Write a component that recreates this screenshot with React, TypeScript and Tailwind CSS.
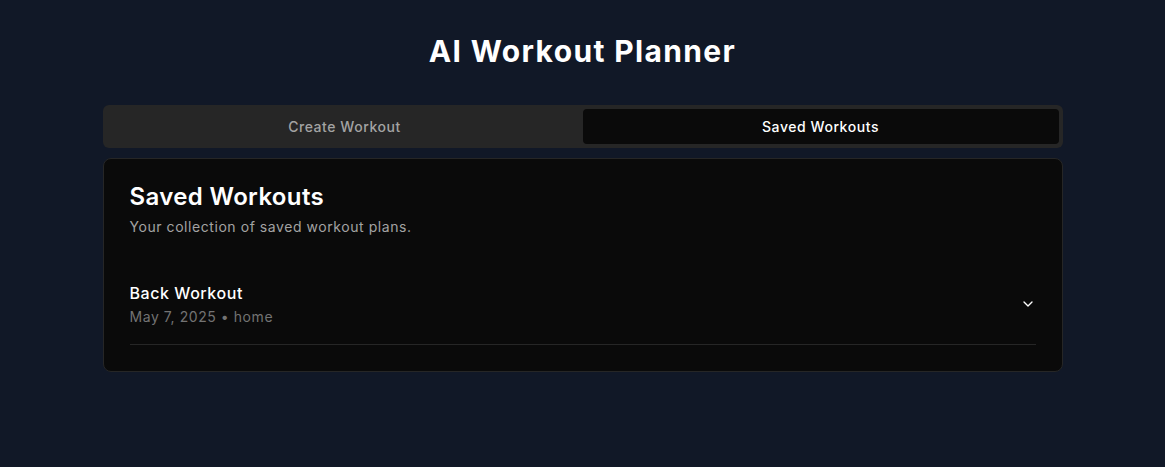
import React from "react";

export default function App() {
  return (
    <div
      className="min-h-screen w-full bg-[#111827] text-white tracking-[0.035em]"
      style={{ fontFamily: "Inter, 'Noto Sans', sans-serif" }}
    >
      <div className="mx-auto max-w-5xl px-8 pt-[33px]">
        <h1 className="mb-9 text-center text-3xl font-bold leading-9 tracking-[0.045em] text-white">AI Workout Planner</h1>

        <div className="grid h-[43px] grid-cols-2 rounded-md bg-[#262626] p-1">
          <button className="flex items-center justify-center rounded-sm text-sm font-medium text-[#a3a3a3]">
            Create Workout
          </button>
          <button className="flex items-center justify-center rounded-sm bg-[#0a0a0a] text-sm font-medium text-white">
            Saved Workouts
          </button>
        </div>

        <div className="mt-[10px] rounded-lg border border-[#262626] bg-[#0a0a0a]">
          <div className="flex flex-col gap-2 px-[26px] pb-6 pt-[26px]">
            <h2 className="text-2xl font-semibold leading-none tracking-[0.015em]">Saved Workouts</h2>
            <p className="text-sm text-[#a3a3a3]">Your collection of saved workout plans.</p>
          </div>
          <div className="px-[26px] pb-[26px] pt-1">
            <div className="flex items-center justify-between border-b border-[#262626] pb-[17px] pt-4">
              <div className="flex flex-col gap-0.5">
                <span className="text-base font-medium leading-6">Back Workout</span>
                <span className="text-sm text-[#737373]">May 7, 2025 • home</span>
              </div>
              <svg
                width="16"
                height="16"
                viewBox="0 0 24 24"
                fill="none"
                stroke="currentColor"
                strokeWidth="2"
                strokeLinecap="round"
                strokeLinejoin="round"
              >
                <path d="m6 9 6 6 6-6" />
              </svg>
            </div>
          </div>
        </div>
      </div>
    </div>
  );
}
